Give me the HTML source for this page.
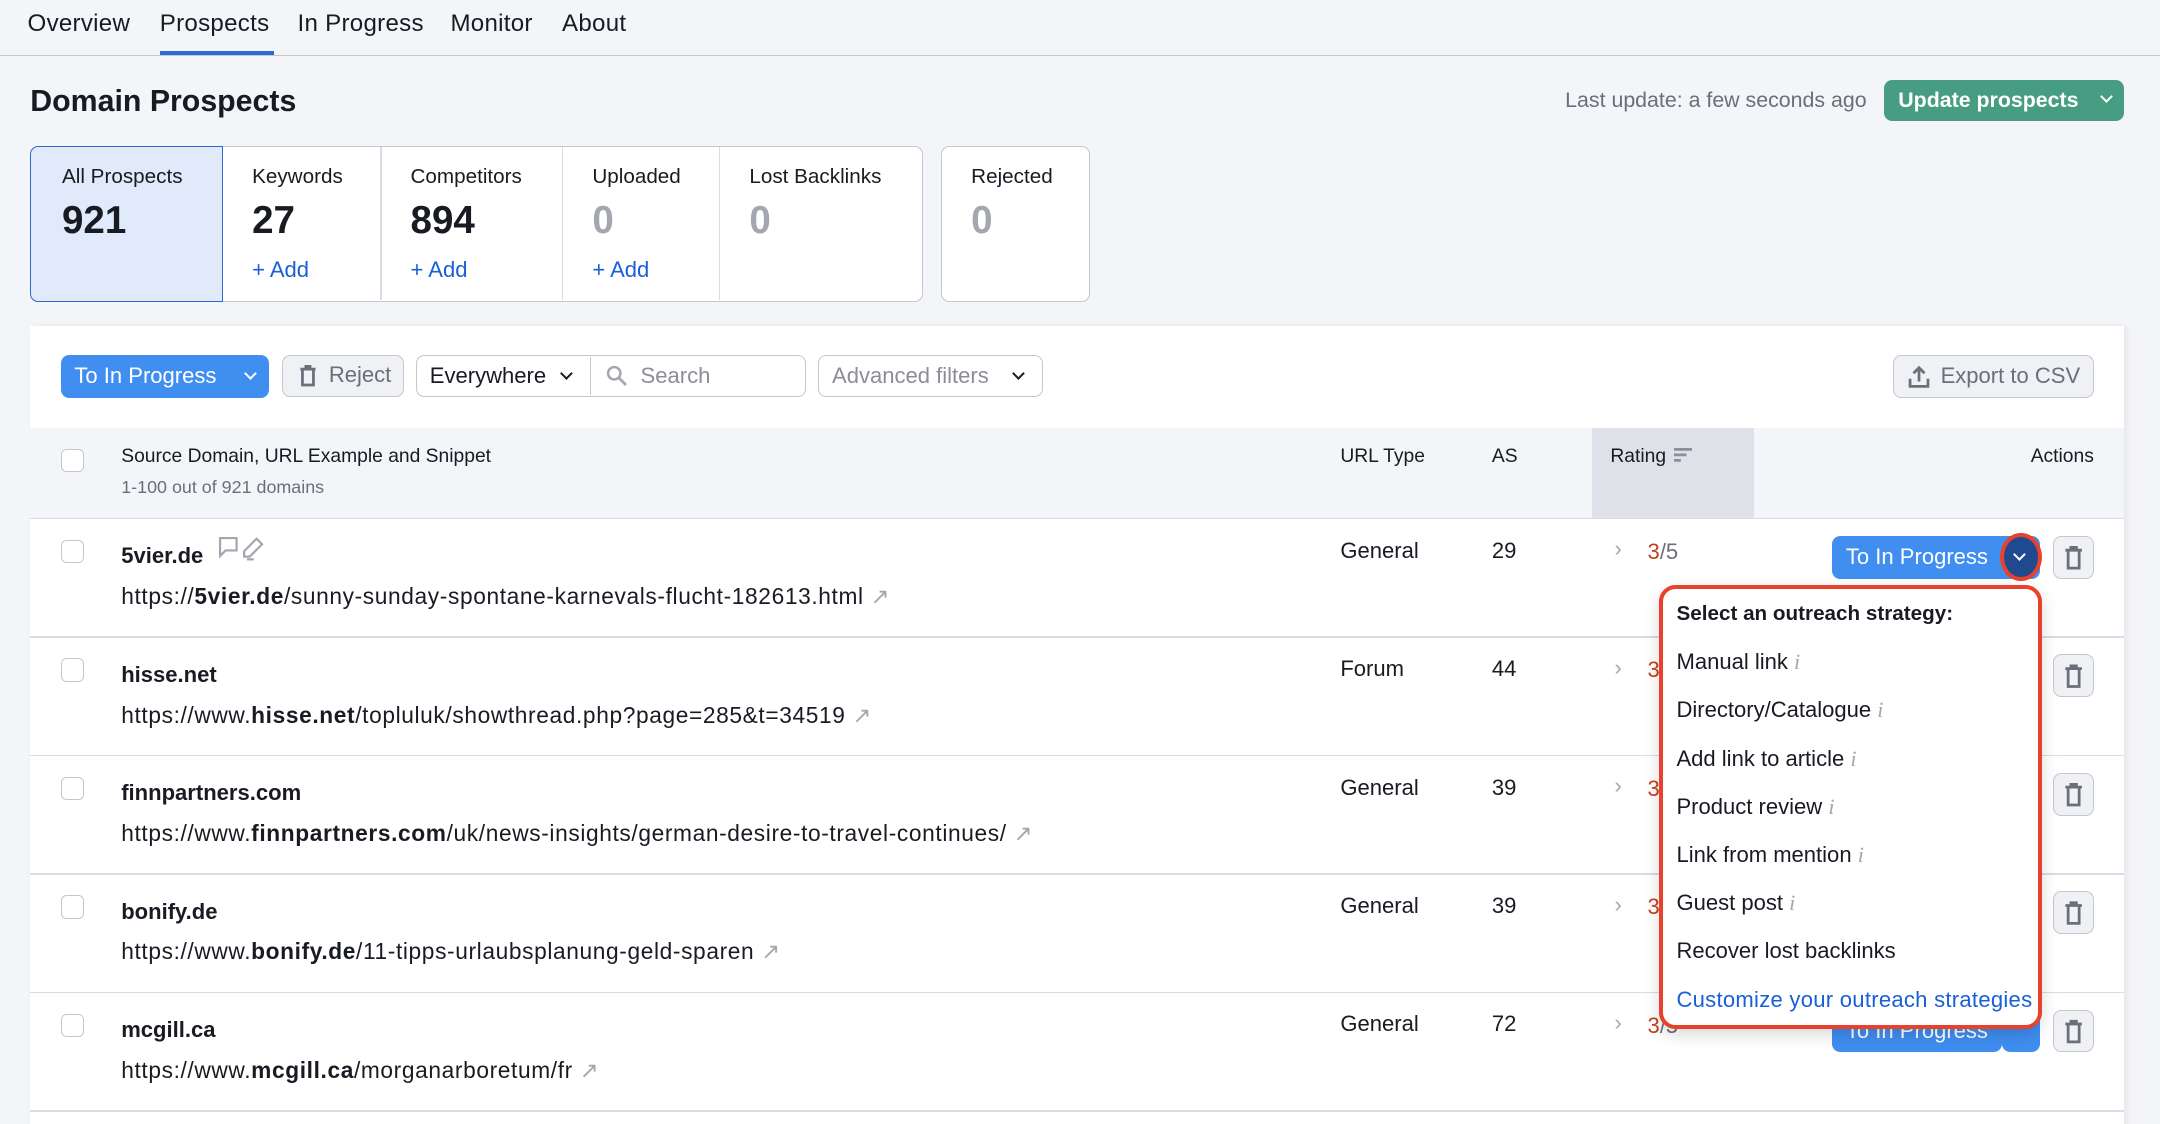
<!DOCTYPE html>
<html><head><meta charset="utf-8"><style>
html,body{margin:0;padding:0;width:2160px;height:1124px;overflow:hidden;background:#f4f5f9}
#w{position:absolute;left:0;top:0;width:1568px;height:816px;overflow:hidden;zoom:1.37755;font-family:"Liberation Sans",Arial,sans-serif;color:#191b23;font-size:15px}
.a{position:absolute;white-space:nowrap;line-height:18px}
.b{position:absolute;box-sizing:border-box}
.chev{display:inline-block;width:6px;height:6px;border-right:2px solid currentColor;border-bottom:2px solid currentColor;transform:rotate(45deg)}
.cb{position:absolute;width:17px;height:17px;border:1px solid #c4c7cf;border-radius:4px;background:#fff;box-sizing:border-box}
.bl{color:#1a5fd8}
.gr{color:#6c6e79}
.trash{position:absolute;width:30px;height:31px;border:1px solid #c4c7cf;border-radius:6px;background:#f0f1f4;box-sizing:border-box}
.btn{position:absolute;height:31px;border-radius:6px;background:#3f8ef0;color:#fff;font-size:16px;line-height:31px}
.it{font-style:italic;color:#a4a6b0;font-family:"Liberation Serif",serif;font-size:16px}
.tab{font-size:17.5px;letter-spacing:.2px}
.u{font-size:16.5px;letter-spacing:.45px}
</style></head><body><div id="w">
<div class="a tab" style="left:20px;top:9px">Overview</div>
<div class="a tab" style="left:116px;top:9px">Prospects</div>
<div class="a tab" style="left:216px;top:9px">In Progress</div>
<div class="a tab" style="left:327px;top:9px">Monitor</div>
<div class="a tab" style="left:408px;top:9px">About</div>
<div class="b" style="left:0;top:40px;width:1568px;height:1px;background:#c4c7cf"></div>
<div class="b" style="left:116px;top:37px;width:83px;height:3px;background:#2e6ad6"></div>
<div class="a" style="left:22px;top:61px;font-size:22px;line-height:26px;font-weight:bold">Domain Prospects</div>
<div class="a gr" style="right:213px;top:64px;font-size:15.5px">Last update: a few seconds ago</div>
<div class="b" style="left:1368px;top:58px;width:174px;height:30px;background:#479d81;border-radius:6px;color:#fff;font-size:15.5px;line-height:30px;padding-left:10px;font-weight:bold">Update prospects<span class="chev" style="position:absolute;right:10px;top:9px;width:5px;height:5px"></span></div>
<div class="b" style="left:22px;top:106px;width:648px;height:113px;background:#fff;border:1px solid #c4c7cf;border-radius:6px"></div>
<div class="b" style="left:22px;top:106px;width:140px;height:113px;background:#e0eafa;border:1px solid #2e6ad6;border-radius:6px 0 0 6px"></div>
<div class="b" style="left:276px;top:107px;width:1px;height:111px;background:#dadce3"></div>
<div class="b" style="left:408px;top:107px;width:1px;height:111px;background:#dadce3"></div>
<div class="b" style="left:522px;top:107px;width:1px;height:111px;background:#dadce3"></div>
<div class="b" style="left:683px;top:106px;width:108px;height:113px;background:#fff;border:1px solid #c4c7cf;border-radius:6px"></div>
<div class="a" style="left:45px;top:120px">All Prospects</div>
<div class="a" style="left:183px;top:120px">Keywords</div>
<div class="a" style="left:298px;top:120px">Competitors</div>
<div class="a" style="left:430px;top:120px">Uploaded</div>
<div class="a" style="left:544px;top:120px">Lost Backlinks</div>
<div class="a" style="left:705px;top:120px">Rejected</div>
<div class="a" style="left:45px;top:145px;font-size:28px;line-height:30px;font-weight:bold">921</div>
<div class="a" style="left:183px;top:145px;font-size:28px;line-height:30px;font-weight:bold">27</div>
<div class="a" style="left:298px;top:145px;font-size:28px;line-height:30px;font-weight:bold">894</div>
<div class="a" style="left:430px;top:145px;font-size:28px;line-height:30px;font-weight:bold;color:#a4a6b0">0</div>
<div class="a" style="left:544px;top:145px;font-size:28px;line-height:30px;font-weight:bold;color:#a4a6b0">0</div>
<div class="a" style="left:705px;top:145px;font-size:28px;line-height:30px;font-weight:bold;color:#a4a6b0">0</div>
<div class="a bl" style="left:183px;top:187px;font-size:16px">+ Add</div>
<div class="a bl" style="left:298px;top:187px;font-size:16px">+ Add</div>
<div class="a bl" style="left:430px;top:187px;font-size:16px">+ Add</div>
<div class="b" style="left:22px;top:237px;width:1520px;height:600px;background:#fff;box-shadow:2px 0 4px rgba(0,0,0,.06)"></div>
<div class="btn" style="left:44px;top:258px;width:151px;padding-left:10px;box-sizing:border-box">To In Progress<span class="chev" style="position:absolute;right:10px;top:10px;width:5px;height:5px"></span></div>
<div class="b" style="left:205px;top:258px;width:88px;height:30px;background:#f0f1f4;border:1px solid #c4c7cf;border-radius:6px;color:#6c6e79;font-size:16px;line-height:28px;padding-left:33px">Reject
<svg style="position:absolute;left:11px;top:6px" width="13" height="16" viewBox="0 0 13 16"><path d="M1 3h11M5 3V1h3v2M2.5 3v11.5h8V3" fill="none" stroke="#6c6e79" stroke-width="2"/></svg></div>
<div class="b" style="left:302px;top:258px;width:283px;height:30px;border:1px solid #c4c7cf;border-radius:6px"></div>
<div class="b" style="left:428px;top:259px;width:1px;height:28px;background:#c4c7cf"></div>
<div class="a" style="left:312px;top:264px;font-size:16px">Everywhere</div>
<span class="chev" style="position:absolute;left:408px;top:268px;width:5px;height:5px"></span>
<svg style="position:absolute;left:440px;top:265px" width="16" height="16" viewBox="0 0 16 16"><circle cx="6" cy="6" r="4.5" fill="none" stroke="#a4a6b0" stroke-width="1.8"/><path d="M9.5 9.5l5 5" stroke="#a4a6b0" stroke-width="2"/></svg>
<div class="a" style="left:465px;top:264px;font-size:16px;color:#8b8e99">Search</div>
<div class="b" style="left:594px;top:258px;width:163px;height:30px;border:1px solid #c4c7cf;border-radius:6px"></div>
<div class="a" style="left:604px;top:264px;font-size:16px;color:#8b8e99">Advanced filters</div>
<span class="chev" style="position:absolute;left:736px;top:268px;width:5px;height:5px"></span>
<div class="b" style="left:1374px;top:258px;width:146px;height:31px;background:#f0f1f4;border:1px solid #c4c7cf;border-radius:6px;color:#6c6e79;font-size:16px;line-height:29px;padding-left:34px">Export to CSV
<svg style="position:absolute;left:10px;top:6px" width="16" height="17" viewBox="0 0 16 17"><path d="M8 12V2M4 6l4-4 4 4M1.5 10v5.5h13V10" fill="none" stroke="#6c6e79" stroke-width="2"/></svg></div>
<div class="b" style="left:22px;top:311px;width:1520px;height:66px;background:#f4f5f9;border-bottom:1px solid #dadce3"></div>
<div class="b" style="left:1156px;top:311px;width:117px;height:65px;background:#e0e1e8"></div>
<div class="cb" style="left:44px;top:326px"></div>
<div class="a" style="left:88px;top:323px;font-size:14px">Source Domain, URL Example and Snippet</div>
<div class="a gr" style="left:88px;top:345px;font-size:13px">1-100 out of 921 domains</div>
<div class="a" style="left:973px;top:323px;font-size:14px">URL Type</div>
<div class="a" style="left:1083px;top:323px;font-size:14px">AS</div>
<div class="a" style="left:1169px;top:323px;font-size:14px">Rating</div>
<svg style="position:absolute;left:1215px;top:325px" width="14" height="12" viewBox="0 0 14 12"><path d="M0 1h13M0 5h9M0 9h5" stroke="#8b8e99" stroke-width="2"/></svg>
<div class="a" style="right:48px;top:323px;font-size:14px">Actions</div>
<div class="b" style="left:22px;top:462px;width:1520px;height:1px;background:#dadce3"></div>
<div class="b" style="left:22px;top:548px;width:1520px;height:1px;background:#dadce3"></div>
<div class="b" style="left:22px;top:634px;width:1520px;height:1px;background:#dadce3"></div>
<div class="b" style="left:22px;top:720px;width:1520px;height:1px;background:#dadce3"></div>
<div class="b" style="left:22px;top:806px;width:1520px;height:1px;background:#dadce3"></div>

<div class="cb" style="left:44px;top:392px"></div>
<div class="a" style="left:88px;top:395px;font-size:16px;font-weight:bold">5vier.de</div>
<svg style="position:absolute;left:158px;top:389px" width="36" height="18" viewBox="0 0 36 18"><path d="M1.5 1.5h12v9h-8l-4 4z" fill="none" stroke="#a4a6b0" stroke-width="1.6"/><path d="M28 2l4 4-9 9h-4v-4z M21 17h5" fill="none" stroke="#a4a6b0" stroke-width="1.6"/></svg>
<div class="a u" style="left:88px;top:424px">https://<b>5vier.de</b>/sunny-sunday-spontane-karnevals-flucht-182613.html <span style="color:#a4a6b0">&#x2197;</span></div>
<div class="a" style="left:973px;top:391px;font-size:16px">General</div>
<div class="a" style="left:1083px;top:391px;font-size:16px">29</div>

<div class="cb" style="left:44px;top:478px"></div>
<div class="a" style="left:88px;top:481px;font-size:16px;font-weight:bold">hisse.net</div>
<div class="a u" style="left:88px;top:510px">https://www.<b>hisse.net</b>/topluluk/showthread.php?page=285&amp;t=34519 <span style="color:#a4a6b0">&#x2197;</span></div>
<div class="a" style="left:973px;top:477px;font-size:16px">Forum</div>
<div class="a" style="left:1083px;top:477px;font-size:16px">44</div>

<div class="cb" style="left:44px;top:564px"></div>
<div class="a" style="left:88px;top:567px;font-size:16px;font-weight:bold">finnpartners.com</div>
<div class="a u" style="left:88px;top:596px">https://www.<b>finnpartners.com</b>/uk/news-insights/german-desire-to-travel-continues/ <span style="color:#a4a6b0">&#x2197;</span></div>
<div class="a" style="left:973px;top:563px;font-size:16px">General</div>
<div class="a" style="left:1083px;top:563px;font-size:16px">39</div>

<div class="cb" style="left:44px;top:650px"></div>
<div class="a" style="left:88px;top:653px;font-size:16px;font-weight:bold">bonify.de</div>
<div class="a u" style="left:88px;top:682px">https://www.<b>bonify.de</b>/11-tipps-urlaubsplanung-geld-sparen <span style="color:#a4a6b0">&#x2197;</span></div>
<div class="a" style="left:973px;top:649px;font-size:16px">General</div>
<div class="a" style="left:1083px;top:649px;font-size:16px">39</div>

<div class="cb" style="left:44px;top:736px"></div>
<div class="a" style="left:88px;top:739px;font-size:16px;font-weight:bold">mcgill.ca</div>
<div class="a u" style="left:88px;top:768px">https://www.<b>mcgill.ca</b>/morganarboretum/fr <span style="color:#a4a6b0">&#x2197;</span></div>
<div class="a" style="left:973px;top:735px;font-size:16px">General</div>
<div class="a" style="left:1083px;top:735px;font-size:16px">72</div>

<div class="a" style="left:1172px;top:390px;color:#a4a6b0;font-size:16px">&#x203A;</div>
<div class="a" style="left:1172px;top:476px;color:#a4a6b0;font-size:16px">&#x203A;</div>
<div class="a" style="left:1172px;top:562px;color:#a4a6b0;font-size:16px">&#x203A;</div>
<div class="a" style="left:1172px;top:648px;color:#a4a6b0;font-size:16px">&#x203A;</div>
<div class="a" style="left:1172px;top:734px;color:#a4a6b0;font-size:16px">&#x203A;</div>
<div class="a" style="left:1196px;top:392px;font-size:16px;color:#6c6e79"><span style="color:#c2401f">3</span>/5</div>
<div class="a" style="left:1196px;top:478px;font-size:16px;color:#c2401f">3</div>
<div class="a" style="left:1196px;top:564px;font-size:16px;color:#c2401f">3</div>
<div class="a" style="left:1196px;top:650px;font-size:16px;color:#c2401f">3</div>
<div class="a" style="left:1196px;top:736px;font-size:16px;color:#6c6e79"><span style="color:#c2401f">3</span>/5</div>

<div class="btn" style="left:1330px;top:389px;width:151px;padding-left:10px;box-sizing:border-box">To In Progress</div>
<div class="b" style="left:1452px;top:387px;width:30px;height:35px;background:#1f4a8f;border:3px solid #e8412c;border-radius:50%"></div>
<span class="chev" style="position:absolute;left:1463px;top:399px;width:5px;height:5px;color:#fff"></span>
<div class="btn" style="left:1330px;top:733px;width:123px;padding-left:10px;box-sizing:border-box">To In Progress</div>
<div class="btn" style="left:1453px;top:733px;width:28px;background:#3f8ef0"></div>
<div class="trash" style="left:1490px;top:389px"></div>
<div class="trash" style="left:1490px;top:475px"></div>
<div class="trash" style="left:1490px;top:561px"></div>
<div class="trash" style="left:1490px;top:647px"></div>
<div class="trash" style="left:1490px;top:733px"></div>
<svg style="position:absolute;left:1498px;top:396px" width="14" height="370" viewBox="0 0 14 370">
<g fill="none" stroke="#6c6e79" stroke-width="2">
<path d="M1 3h12M5 3V1h4v2M3 3v13h8V3"/>
<path transform="translate(0,86)" d="M1 3h12M5 3V1h4v2M3 3v13h8V3"/>
<path transform="translate(0,172)" d="M1 3h12M5 3V1h4v2M3 3v13h8V3"/>
<path transform="translate(0,258)" d="M1 3h12M5 3V1h4v2M3 3v13h8V3"/>
<path transform="translate(0,344)" d="M1 3h12M5 3V1h4v2M3 3v13h8V3"/>
</g></svg>

<div class="b" style="left:1204px;top:425px;width:278px;height:322px;background:#fff;border:3px solid #e8412c;border-radius:12px;box-shadow:0 4px 12px rgba(0,0,0,.15)"></div>
<div class="a" style="left:1217px;top:437px;font-size:15px;font-weight:bold">Select an outreach strategy:</div>
<div class="a" style="left:1217px;top:472px;font-size:16px">Manual link <span class="it">i</span></div>
<div class="a" style="left:1217px;top:507px;font-size:16px">Directory/Catalogue <span class="it">i</span></div>
<div class="a" style="left:1217px;top:542px;font-size:16px">Add link to article <span class="it">i</span></div>
<div class="a" style="left:1217px;top:577px;font-size:16px">Product review <span class="it">i</span></div>
<div class="a" style="left:1217px;top:612px;font-size:16px">Link from mention <span class="it">i</span></div>
<div class="a" style="left:1217px;top:647px;font-size:16px">Guest post <span class="it">i</span></div>
<div class="a" style="left:1217px;top:682px;font-size:16px">Recover lost backlinks</div>
<div class="a bl" style="left:1217px;top:717px;font-size:16px;letter-spacing:.2px">Customize your outreach strategies</div>
</div></body></html>
